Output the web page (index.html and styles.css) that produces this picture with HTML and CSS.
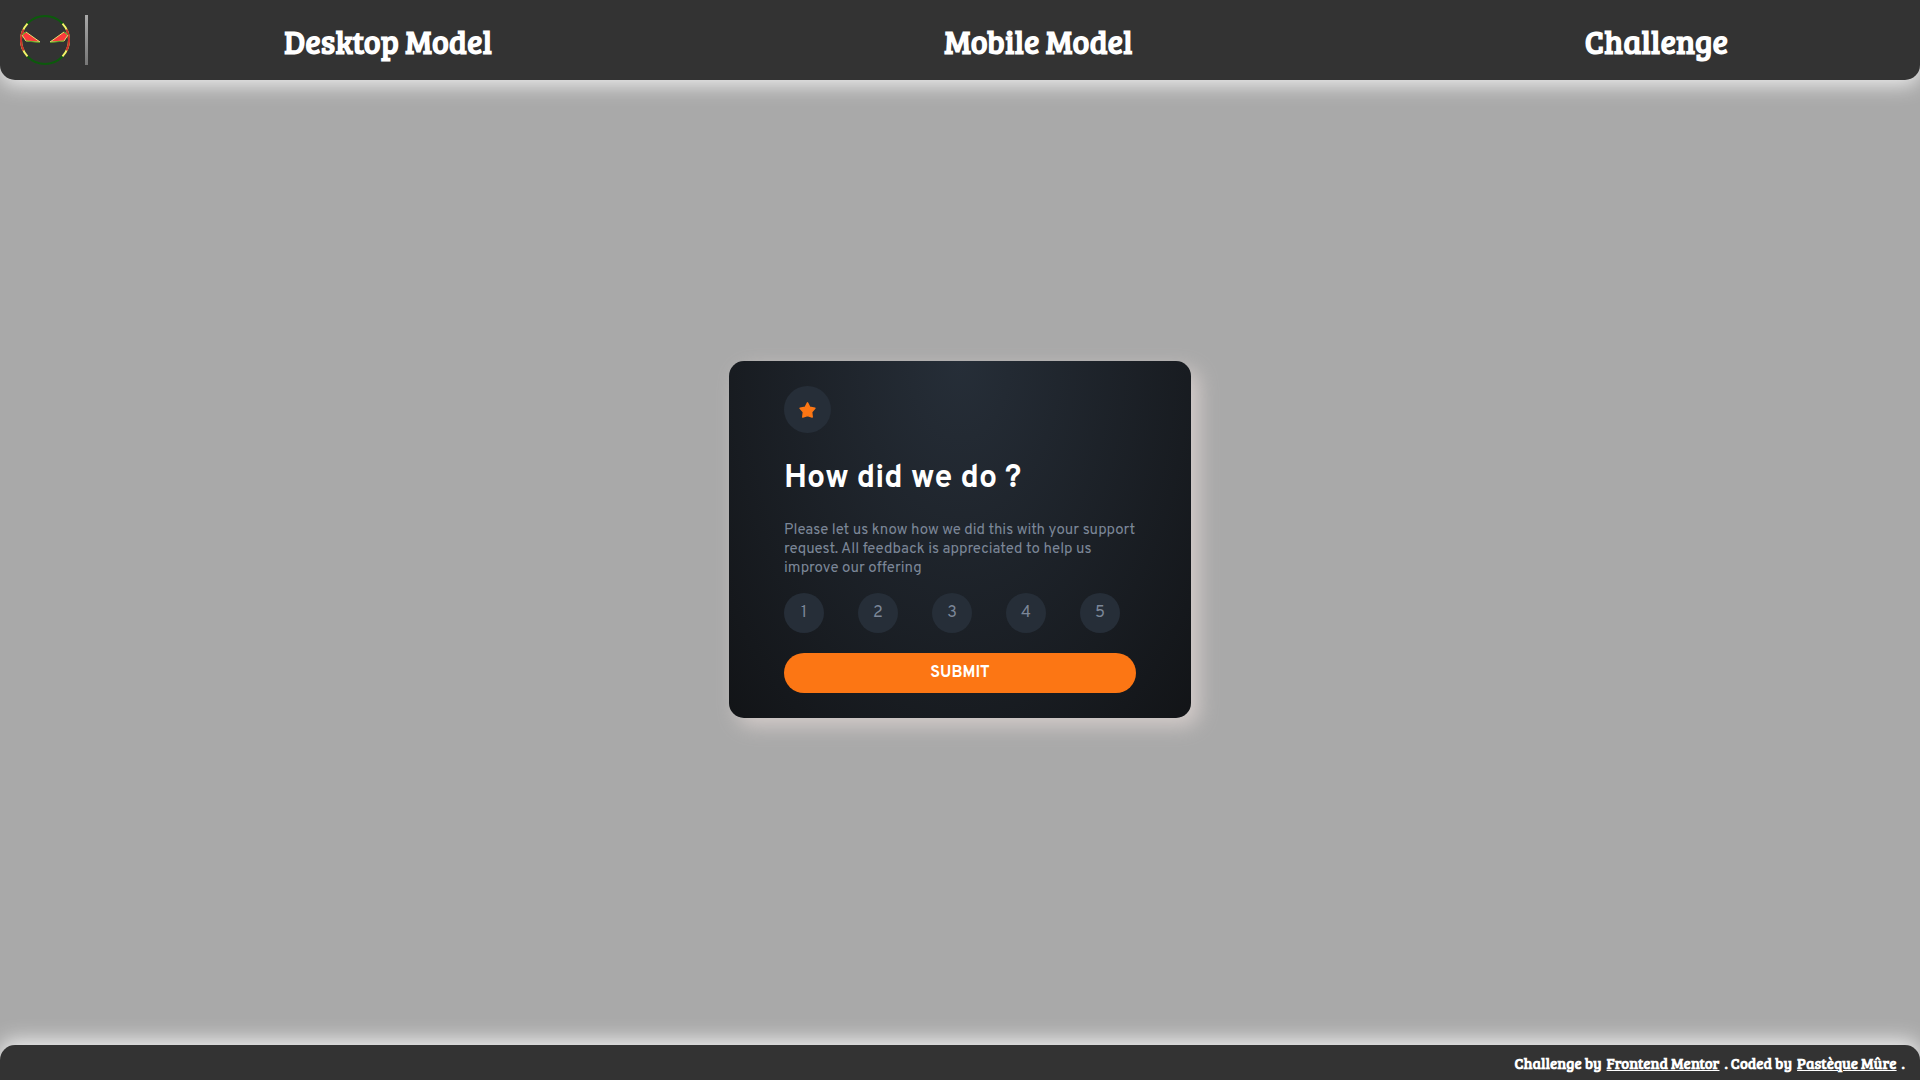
FILE: index.html
```html
<!DOCTYPE html>
<html lang="en">
<head>
<meta charset="utf-8">
<meta name="viewport" content="width=device-width, initial-scale=1">
<title>Interactive rating component</title>
<link rel="stylesheet" href="styles.css">
</head>
<body>
<header class="header">
  <a class="logo" href="#" aria-label="Home">
    <svg viewBox="0 0 50 50" width="50" height="50" fill="none" aria-hidden="true">
      <g stroke-width="2">
        <circle cx="25" cy="25" r="24" stroke="#0c5a0c"/>
        <path d="M7.500 8.600A24 24 0 0 0 7.500 41.400M42.500 8.600A24 24 0 0 1 42.500 41.400" stroke="#f6f36a"/>
        <path d="M3.500 14.500A24 24 0 0 0 3.500 35.500M46.500 14.500A24 24 0 0 1 46.500 35.500" stroke="#c9302c"/>
      </g>
      <path d="M2 20L6 17L20 27L6 26ZM48 20L44 17L30 27L44 26Z" fill="#fb3b3b" stroke="#e8e070"/>
      <path d="M6 26L20 27.500M44 26L30 27.500M2 20L6 17M48 20L44 17" stroke="#4f9a20"/>
    </svg>
  </a>
  <span class="separator"></span>
  <nav class="nav">
    <a href="#">Desktop Model</a>
    <a href="#">Mobile Model</a>
    <a href="#">Challenge</a>
  </nav>
</header>
<main class="main">
  <form class="card">
    <span class="badge">
      <svg viewBox="0 0 17 16" width="17" height="16" aria-hidden="true"><path d="M8.500 0.800L10.800 5.300L15.900 6.200L12.600 9.900L13.200 15L8.500 13.600L3.800 15L4.400 9.900L1.100 6.200L6.200 5.300Z" fill="#fc7614" stroke="#fc7614" stroke-width="1.500" stroke-linejoin="round"/></svg>
    </span>
    <h1>How did we do ?</h1>
    <p>Please let us know how we did this with your support request. All feedback is appreciated to help us improve our offering</p>
    <div class="ratings">
      <button type="button">1</button>
      <button type="button">2</button>
      <button type="button">3</button>
      <button type="button">4</button>
      <button type="button">5</button>
    </div>
    <button class="submit" type="submit">SUBMIT</button>
  </form>
</main>
<footer class="footer">
  <span>Challenge by</span>
  <a href="#">Frontend Mentor</a>
  <span>. Coded by</span>
  <a href="#">Pastèque Mûre</a>
  <span>.</span>
</footer>
</body>
</html>
```
FILE: styles.css
```css
* {
  box-sizing: border-box;
}

body {
  margin: 0;
  min-height: 100vh;
  display: flex;
  flex-direction: column;
  background: #a9a9a9;
  color: #fff;
  font-family: "Bree Serif", "DejaVu Serif Condensed", "DejaVu Serif", serif;
}

.header {
  display: flex;
  align-items: center;
  height: 80px;
  padding-left: 20px;
  background: #333;
  border-radius: 0 0 15px 15px;
  box-shadow: 0 5px 20px #eee;
}

.logo {
  display: flex;
}

.separator {
  width: 3px;
  height: 50px;
  margin: 0 4px 0 15px;
  background: linear-gradient(#a9a9a9, #777);
}

.nav {
  flex: 1;
  display: flex;
  justify-content: space-between;
  padding: 4px 192px 0;
  font-size: 32px;
  line-height: 40px;
  font-weight: bold;
}

.nav a {
  color: #fff;
  text-decoration: none;
}

.main {
  flex: 1;
  display: flex;
  align-items: center;
  justify-content: center;
  padding: 16px 16px 62px;
}

.card {
  width: 100%;
  max-width: 462px;
  padding: 25px 55px;
  background: radial-gradient(ellipse at top, #262e38, #121417);
  border-radius: 15px;
  box-shadow: 8px 8px 20px #d4ccca;
  font-family: Overpass, Roboto, sans-serif;
}

.badge {
  display: flex;
  align-items: center;
  justify-content: center;
  width: 47px;
  height: 47px;
  border-radius: 50%;
  background: #262e38;
}

h1 {
  margin: 26px 0 22px;
  font-size: 32px;
  line-height: 40px;
}

p {
  margin: 0 0 15px;
  color: #7c8798;
  font-size: 15px;
  line-height: 19px;
}

.ratings {
  display: flex;
  gap: 34px;
  margin-bottom: 20px;
}

button {
  height: 40px;
  padding: 0;
  border: 0;
  border-radius: 20px;
  font-family: inherit;
  font-size: 16px;
  cursor: pointer;
}

.ratings button {
  width: 40px;
  background: #262e38;
  color: #7c8798;
}

.submit {
  display: block;
  width: 100%;
  background: #fc7614;
  color: #fff;
  font-weight: bold;
}

.footer {
  display: flex;
  align-items: center;
  justify-content: flex-end;
  gap: 5px;
  height: 35px;
  padding: 0 15px;
  background: #333;
  border-radius: 15px 15px 0 0;
  box-shadow: 0 -5px 20px #eee;
  font-size: 15px;
  font-weight: bold;
}

.footer a {
  color: #fff;
}
```
